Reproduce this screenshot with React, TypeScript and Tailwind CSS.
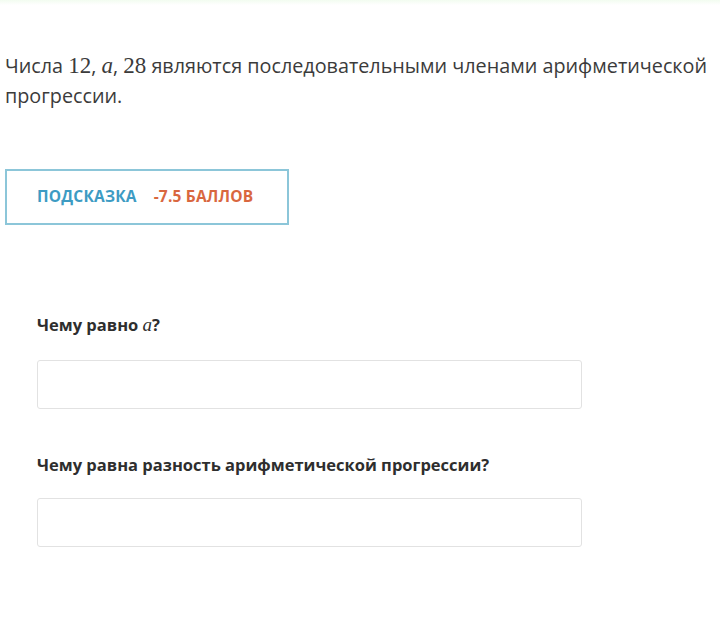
export default function App() {
  const math = "font-['Liberation_Serif','DejaVu_Serif',serif]";
  return (
    <div className="relative h-[629px] w-[720px] bg-white font-['Open_Sans','Noto_Sans',sans-serif] text-[#333]">
      <div className="h-[5px] w-full bg-gradient-to-b from-[#f2fcf0] to-white" />
      <p className="mt-[46px] px-[5px] text-[19.8px] leading-[30px] text-[#3b3b3b]">
        Числа <span className={`${math} text-[23px]`}>12</span>,{" "}
        <span className={`${math} text-[23px] italic`}>a</span>,{" "}
        <span className={`${math} text-[23px]`}>28</span> являются последовательными членами арифметической
        прогрессии.
      </p>
      <div className="ml-[5px] mt-[58px] flex h-[56px] w-[284px] items-center border-2 border-[#8cc6d9] pl-[30px] text-[15.5px] font-bold tracking-[0.2px]">
        <span className="text-[#3d9bc3]">ПОДСКАЗКА</span>
        <span className="ml-[17px] text-[#d9673f]">-7.5 БАЛЛОВ</span>
      </div>
      <div className="ml-[37px] mt-[88px] w-[545px]">
        <div className="text-[16.5px] font-bold leading-[24px] text-[#2e2e2e]">
          Чему равно <span className={`${math} text-[19px] font-normal italic`}>a</span>?
        </div>
        <div className="mt-[23px] h-[49px] rounded-[3px] border border-[#e2e2e2] bg-white" />
        <div className="mt-[44px] text-[16.5px] font-bold leading-[24px] text-[#2e2e2e]">
          Чему равна разность арифметической прогрессии?
        </div>
        <div className="mt-[21px] h-[49px] rounded-[3px] border border-[#e2e2e2] bg-white" />
      </div>
    </div>
  );
}
